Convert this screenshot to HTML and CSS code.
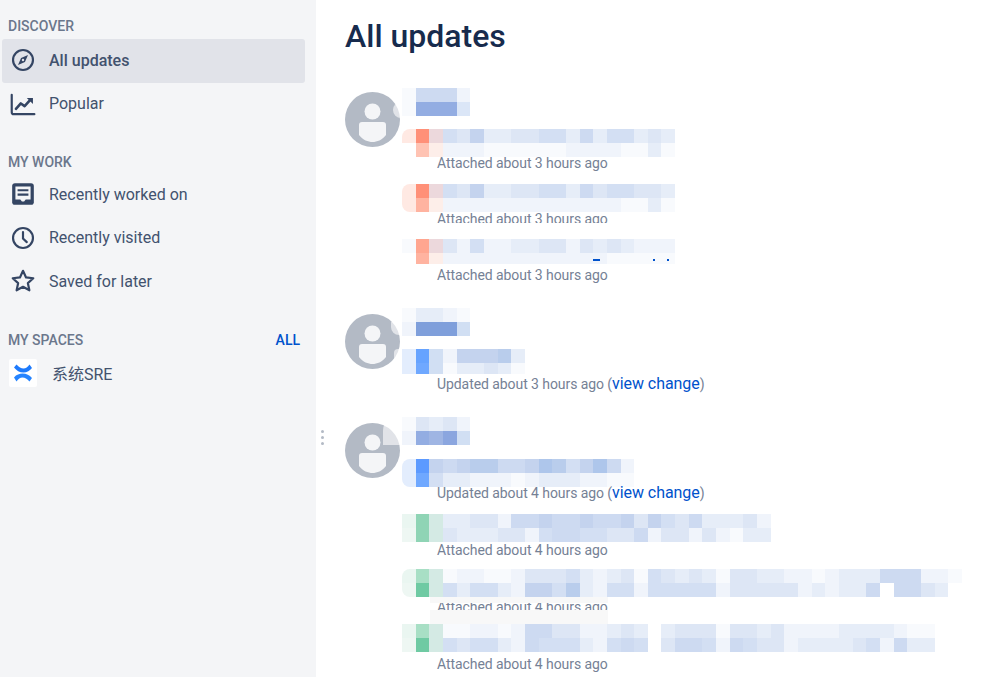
FILE: index.html
```html
<!DOCTYPE html>
<html lang="en">
  <head>
    <meta charset="UTF-8" />
    <meta name="viewport" content="width=device-width, initial-scale=1.0" />
    <title>All updates</title>
    <link rel="stylesheet" href="styles.css">
  </head>
  <body>
    <div class="page">
      <aside class="sidebar">
        <h3 class="nav-title nav-title-first">DISCOVER</h3>
        <a class="nav-item nav-item-active">
          <svg class="nav-icon" viewBox="0 0 24 24">
            <circle cx="12" cy="12" r="9.2" fill="none" stroke="#344563" stroke-width="2" />
            <path d="M16.6 7.4 13.8 13.8 7.4 16.6 10.2 10.2Z" fill="#344563" />
            <circle cx="12" cy="12" r="1.1" fill="#e1e3e9" />
          </svg>
          <span>All updates</span>
        </a>
        <a class="nav-item">
          <svg class="nav-icon" viewBox="0 0 24 24">
            <path d="M1.6 3.5V19.5C1.6 20.6 2.4 21.4 3.5 21.4H22.5" fill="none" stroke="#344563" stroke-width="2" stroke-linecap="round" />
            <path d="M5.5 16.5 10 11.5 13.5 14 18.5 8.5" fill="none" stroke="#344563" stroke-width="2.4" stroke-linecap="round" stroke-linejoin="round" />
            <path d="M15.5 6.5H21.2V12Z" fill="#344563" />
          </svg>
          <span>Popular</span>
        </a>

        <h3 class="nav-title">MY WORK</h3>
        <a class="nav-item">
          <svg class="nav-icon" viewBox="0 0 24 24">
            <path d="M4.5 2H19.500C21 2 22 3 22 4.500V19.500C22 21 21 22 19.500 22H4.500C3 22 2 21 2 19.500V4.500C2 3 3 2 4.500 2Z" fill="#344563" />
            <path d="M5 5H19V17H14.500L13 19H11L9.500 17H5Z" fill="#f4f5f7" />
            <path d="M7 8.500H17M7 12.500H17" stroke="#344563" stroke-width="2" />
          </svg>
          <span>Recently worked on</span>
        </a>
        <a class="nav-item">
          <svg class="nav-icon" viewBox="0 0 24 24">
            <circle cx="12" cy="12" r="9.2" fill="none" stroke="#344563" stroke-width="2" />
            <path d="M12 6.5V12.5L15.5 15.8" fill="none" stroke="#344563" stroke-width="2" stroke-linecap="round" />
          </svg>
          <span>Recently visited</span>
        </a>
        <a class="nav-item">
          <svg class="nav-icon" viewBox="0 0 24 24">
            <path d="M12 2.6 14.8 8.7 21.5 9.5 16.5 14 17.9 20.6 12 17.3 6.1 20.6 7.5 14 2.5 9.5 9.2 8.7Z" fill="none" stroke="#344563" stroke-width="2" stroke-linejoin="round" />
          </svg>
          <span>Saved for later</span>
        </a>

        <div class="nav-title-row">
          <h3 class="nav-title">MY SPACES</h3>
          <a class="nav-all">ALL</a>
        </div>
        <a class="space-item">
          <span class="space-logo">
            <svg viewBox="0 0 20 20" width="20" height="20">
              <path d="M1 4.500 3.500 1.500C6 4 8 5.500 10.500 5.500 13 5.500 14.500 4 16.500 1.500L19 5C17 7.500 14 9.500 10.500 9.500 6.500 9.500 3.500 7.500 1 4.500Z" fill="#1d7afc" />
              <path d="M1 14.500C3.500 11.500 6.500 10.500 9.500 10.500 13.500 10.500 16.500 12 19 15L16.500 18.500C14 16 12 14.500 9.500 14.500 7 14.500 5.500 16 3.500 18.500Z" fill="#2684ff" />
            </svg>
          </span>
          <span>系统SRE</span>
        </a>
      </aside>

      <div class="drag-handle"><i></i><i></i><i></i></div>

      <main class="content">
        <h1>All updates</h1>

        <section class="group">
          <svg class="avatar" viewBox="0 0 55 55">
            <circle cx="27.5" cy="27.5" r="27.5" fill="#b3bac5" />
            <circle cx="27.5" cy="19.5" r="8" fill="#f4f5f7" />
            <path d="M17 30H38C40 30 41 31 41 33V43C37 48 32 50 27.500 50S18 48 14 43V33C14 31 15 30 17 30Z" fill="#f4f5f7" />
          </svg>
          <div class="group-body">
            <div class="mosaic name" data-rows="05551|0xxxy"></div>
            <div class="item">
              <div class="mosaic mosaic-round" data-rows="abc43622334425244232|.de11100000011110020"></div>
              <p class="meta">Attached about 3 hours ago</p>
            </div>
            <div class="item">
              <div class="mosaic mosaic-round lift-1" data-rows="abc43622334425344332|aEe11111111111110020"></div>
              <p class="meta">Attached about 3 hours ago</p>
              <div class="smudge smudge-cut"></div>
            </div>
            <div class="item">
              <div class="mosaic mosaic-short lift-2" data-rows="0fc31411223313232111|.Ee11111111111100000"></div>
              <p class="meta">Attached about 3 hours ago</p>
              <div class="ink"></div>
            </div>
          </div>
          <div class="smudge smudge-side"></div>
        </section>

        <section class="group">
          <svg class="avatar" viewBox="0 0 55 55">
            <circle cx="27.5" cy="27.5" r="27.5" fill="#b3bac5" />
            <circle cx="27.5" cy="19.5" r="8" fill="#f4f5f7" />
            <path d="M17 30H38C40 30 41 31 41 33V43C37 48 32 50 27.500 50S18 48 14 43V33C14 31 15 30 17 30Z" fill="#f4f5f7" />
          </svg>
          <div class="group-body">
            <div class="mosaic name lift-2" data-rows="02210|1zzzj"></div>
            <div class="item name-tight">
              <div class="mosaic mosaic-short lift-1" data-rows="hij166672|hJj022320"></div>
              <p class="meta">Updated about 3 hours ago (<a class="meta-link">view change</a>)</p>
            </div>
          </div>
          <div class="smudge smudge-side-a"></div>
          <div class="smudge smudge-side-b"></div>
        </section>

        <section class="group">
          <svg class="avatar" viewBox="0 0 55 55">
            <circle cx="27.5" cy="27.5" r="27.5" fill="#b3bac5" />
            <circle cx="27.5" cy="19.5" r="8" fill="#f4f5f7" />
            <path d="M17 30H38C40 30 41 31 41 33V43C37 48 32 50 27.500 50S18 48 14 43V33C14 31 15 30 17 30Z" fill="#f4f5f7" />
          </svg>
          <div class="group-body">
            <div class="mosaic name lift-2" data-rows="03231|1xuvj"></div>
            <div class="item name-tight item-wide">
              <div class="mosaic mosaic-round" data-rows="hI6567755 6t746t51|hJ422111012221100."></div>
              <p class="meta">Updated about 4 hours ago (<a class="meta-link">view change</a>)</p>
            </div>
            <div class="item item-wide">
              <div class="mosaic lift-2" data-rows="lmn223315565565563643522231|qmn322233145544335133131022"></div>
              <p class="meta">Attached about 4 hours ago</p>
            </div>
            <div class="item item-wide">
              <div class="mosaic mosaic-round lift-4" data-rows="lon01100133342123043232033221101222555110|qpn424421664721441444441333331212 25.5532"></div>
              <p class="meta">Attached about 4 hours ago</p>
              <div class="smudge smudge-top"></div>
              <div class="smudge smudge-bottom"></div>
            </div>
            <div class="item item-wide">
              <div class="mosaic lift-6" data-rows="lon0011015533112 32.233303323111122221 00|qpn434421544421454.355415433122223415 22"></div>
              <p class="meta">Attached about 4 hours ago</p>
            </div>
          </div>
          <div class="smudge smudge-round"></div>
        </section>
      </main>
    </div>

    <script src="mosaic.js"></script>
  </body>
</html>
```

FILE: styles.css
```css
* {
  box-sizing: border-box;
}

body {
  margin: 0;
  font-family: Roboto, "Noto Sans CJK SC", sans-serif;
  color: #172b4d;
  background-color: #fff;
}

.page {
  display: flex;
  height: 100vh;
  overflow: hidden;
  position: relative;
}

/* sidebar */
.sidebar {
  width: 316px;
  flex-shrink: 0;
  padding: 16px 11px 0 2px;
  background-color: #f4f5f7;
}

.nav-title {
  margin: 0;
  padding-left: 6px;
  font-size: 14px;
  font-weight: 500;
  line-height: 20px;
  color: #6b778c;
}

.nav-item + .nav-title {
  margin-top: 25px;
  margin-bottom: 2px;
}

.nav-title-first {
  margin-bottom: 3px;
}

.nav-title-row {
  display: flex;
  justify-content: space-between;
  align-items: center;
  margin-top: 26px;
  margin-bottom: 9px;
  padding-right: 5px;
}

.nav-all {
  font-size: 14px;
  font-weight: 500;
  line-height: 20px;
  color: #0052cc;
}

.nav-item {
  display: flex;
  align-items: center;
  gap: 13px;
  height: 43.500px;
  padding-bottom: 2px;
  padding-left: 8px;
  border-radius: 3px;
  font-size: 16px;
  color: #42526e;
}

.nav-item-active {
  height: 44px;
  background-color: #e1e3e9;
  font-weight: 500;
}

.nav-icon {
  width: 26px;
  height: 26px;
  flex-shrink: 0;
}

.space-item {
  display: flex;
  align-items: center;
  gap: 15px;
  padding-left: 7px;
  font-size: 16px;
  color: #42526e;
}

.space-logo {
  display: flex;
  align-items: center;
  justify-content: center;
  width: 28px;
  height: 28px;
  border-radius: 2px;
  background-color: #fff;
}

.drag-handle {
  position: absolute;
  left: 321px;
  top: 430px;
  display: flex;
  flex-direction: column;
  gap: 3px;
}

.drag-handle i {
  display: block;
  width: 3px;
  height: 3px;
  border-radius: 50%;
  background-color: #b3bac5;
}

/* feed */
.content {
  flex: 1;
  padding: 16px 0 0 29px;
}

.content h1 {
  margin: 0 0 32px;
  font-size: 32px;
  font-weight: 500;
  line-height: 40px;
  color: #172b4d;
}

.group {
  position: relative;
  display: flex;
  align-items: flex-start;
  gap: 2px;
}

.group + .group {
  margin-top: 13px;
}

.avatar {
  width: 55px;
  height: 55px;
  margin-top: 4px;
  flex-shrink: 0;
}

.group-body {
  flex: 1;
}

.item {
  position: relative;
  margin-bottom: 12px;
}

.item-wide {
  margin-bottom: 13px;
}

.group > .group-body > .item:last-child {
  margin-bottom: 12px;
}

.name {
  margin-bottom: 13px;
}

.name-tight {
  margin-top: -1px;
}

.meta {
  margin: 0;
  padding-left: 35px;
  font-size: 14px;
  line-height: 20px;
  letter-spacing: -0.07px;
  color: #758195;
  white-space: nowrap;
}

.meta-link {
  font-size: 16px;
  color: #0052cc;
}

/* pixelated blur over the names and titles */
.mosaic {
  display: flex;
  flex-direction: column;
  width: max-content;
  height: 28px;
  overflow: hidden;
}

.item > .mosaic {
  margin-bottom: -4px;
}

.mosaic-row {
  display: flex;
  height: 14px;
  flex-shrink: 0;
}

.mosaic-row i {
  display: block;
  width: 13.67px;
  height: 14px;
}

.mosaic-round {
  border-radius: 8px 0 0 8px;
}

.mosaic-short {
  height: 25px;
}

.item > .mosaic-short {
  margin-bottom: -1px;
}

.lift-1 { transform: translateY(-1px); }
.lift-2 { transform: translateY(-2px); }
.lift-4 { transform: translateY(-4px); }
.lift-6 { transform: translateY(-6px); }

/* leftover brush strokes of the redaction */
.smudge {
  position: absolute;
}

.smudge-side {
  left: 48px;
  top: 14px;
  width: 9px;
  height: 16px;
  border-radius: 8px 0 0 8px;
  background-color: rgba(255, 255, 255, 0.6);
}

.smudge-side-a {
  left: 46px;
  top: 12px;
  width: 11px;
  height: 13px;
  border-radius: 0 0 0 8px;
  background-color: rgba(255, 255, 255, 0.6);
}

.smudge-side-b {
  left: 49px;
  top: 39px;
  width: 8px;
  height: 14px;
  border-radius: 4px 0 0 4px;
  background-color: rgba(255, 255, 255, 0.6);
}

.smudge-round {
  left: 38px;
  top: -2px;
  width: 19px;
  height: 28px;
  border-radius: 14px 0 0 0;
  background-color: rgba(255, 255, 255, 0.6);
}

.smudge-cut {
  left: 35px;
  top: 38px;
  width: 171px;
  height: 14px;
  background-color: #fff;
}

.smudge-top {
  left: 28px;
  top: 24px;
  width: 178px;
  height: 6px;
  background-color: #f8f8f8;
}

.smudge-bottom {
  left: 28px;
  top: 37px;
  width: 178px;
  height: 15px;
  background-color: #f8f8f8;
}

/* bits of link text the redaction missed */
.ink {
  position: absolute;
  left: 191px;
  top: 18px;
  width: 76px;
  height: 2px;
  background: linear-gradient(90deg, #0052cc 0 7px, transparent 7px 60px, #0052cc 60px 62px, transparent 62px 74px, #0052cc 74px 76px);
}
```

FILE: mosaic.js
```js
// colours for the blurred cells, one letter per cell
const colors = {
  0: "#f8fafd", 1: "#f0f4fb", 2: "#e6edf8", 3: "#dde6f5", 4: "#d3dff3",
  5: "#cddaf1", 6: "#c4d3ee", 7: "#b9cdec", t: "#aec6eb",
  x: "#93ade2", y: "#dbe6f7", u: "#9fb5e3", v: "#8ba6df",
  z: "#7f9fdb", j: "#d1dff3",
  a: "#ffe9e3", b: "#ff9078", c: "#ecd8dc", d: "#ffc3b3", e: "#fdeee9",
  f: "#ffa690", E: "#ffb3a0",
  h: "#e3edfd", i: "#66a3ff", I: "#5c9aff", J: "#6fa8ff",
  l: "#eaf6f1", m: "#8fd4b5", n: "#d4eae4", o: "#a8dfc5", p: "#6fcaa3", q: "#eef7f3",
};

document.querySelectorAll(".mosaic").forEach((el) => {
  el.dataset.rows.split("|").forEach((row) => {
    const rowEl = document.createElement("div");
    rowEl.className = "mosaic-row";
    for (const ch of row.replaceAll(" ", "")) {
      const cell = document.createElement("i");
      if (colors[ch]) cell.style.backgroundColor = colors[ch];
      rowEl.appendChild(cell);
    }
    el.appendChild(rowEl);
  });
});
```
